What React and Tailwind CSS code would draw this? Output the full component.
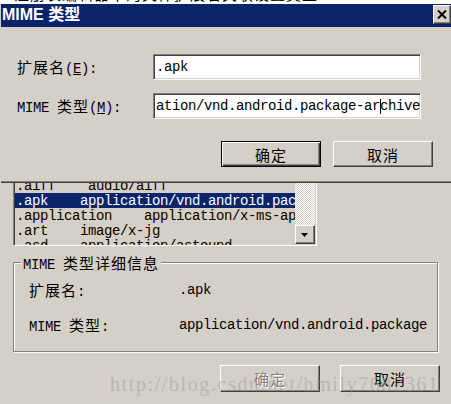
import React from 'react';

const raised =
  'border border-t-white border-l-white border-b-[#404040] border-r-[#404040] shadow-[inset_-1px_-1px_#808080]';
const sunken =
  'border border-t-[#808080] border-l-[#808080] border-b-white border-r-white shadow-[inset_1px_1px_#404040,inset_-1px_-1px_#d4d0c8]';

const Zh = ({ children, className = '' }) => (
  <span className={'text-[15px] tracking-[1px] font-["Noto_Sans_CJK_SC",sans-serif] ' + className}>{children}</span>
);

const rows = [
  '.aiff    audio/aiff',
  '.apk    application/vnd.android.package-archive',
  '.application    application/x-ms-application',
  '.art    image/x-jg',
  '.asd    application/astound',
];

const App = () => {
  return (
    <div className="relative w-[451px] h-[404px] overflow-hidden bg-[#d4d0c8] text-black text-[14px] tracking-[-0.4px] leading-none font-['Liberation_Mono','Noto_Sans_CJK_SC',monospace]">
      {/* parent window, clipped text at the very top */}
      <div className="h-[4px] overflow-hidden bg-white">
        <div className="h-[20px] -mt-[19px] pl-[14px] whitespace-pre flex items-end">
          <Zh>注册表编辑器中的文件扩展名关联设置</Zh>   <Zh>类型</Zh>
        </div>
      </div>

      {/* MIME dialog */}
      <div className="flex flex-col pl-px">
        <div className="h-[23px] bg-[#0a246a] flex items-start justify-between">
          <span className="pl-[1px] pt-[3px] text-white text-[16px] font-bold tracking-normal font-['Liberation_Sans','Noto_Sans_CJK_SC',sans-serif]">
            MIME 类型
          </span>
          <button className={'mt-px w-[18px] h-[19px] bg-[#d4d0c8] flex items-center justify-center ' + raised}>
            <svg width="10" height="9" viewBox="0 0 10 9">
              <path d="M1 0.5 L9 8.5 M9 0.5 L1 8.5" stroke="#000" strokeWidth="2" />
            </svg>
          </button>
        </div>

        <div className="h-[154px] flex flex-col pt-[27px]">
          <div className="flex items-center h-[26px]">
            <span className="w-[152px] pl-[16px] whitespace-pre">
              <Zh>扩展名</Zh>(<span className="underline">E</span>):
            </span>
            <div className={'w-[268px] h-[26px] bg-white flex items-center pl-[2px] ' + sunken}>.apk</div>
          </div>
          <div className="flex items-center h-[26px] mt-[13px]">
            <span className="w-[152px] pl-[16px] whitespace-pre">
              MIME <Zh>类型</Zh>(<span className="underline">M</span>):
            </span>
            <div className={'w-[268px] h-[26px] bg-white flex items-center pl-[2px] whitespace-pre overflow-hidden ' + sunken}>
              ation/vnd.android.package-ar
              <span className="inline-block w-px h-[15px] bg-black -mr-px" />
              chive
            </div>
          </div>
          <div className="flex mt-[22px] pl-[220px] gap-[12px]">
            <button className="w-[100px] h-[26px] border border-black shadow-[inset_1px_1px_#fff,inset_-1px_-1px_#404040,inset_-2px_-2px_#808080] flex items-center justify-center">
              <Zh>确定</Zh>
            </button>
            <button className={'w-[100px] h-[26px] flex items-center justify-center ' + raised}>
              <Zh>取消</Zh>
            </button>
          </div>
        </div>
        <div className="h-px bg-[#808080]" />
        <div className="h-px bg-[#404040]" />
      </div>

      {/* parent dialog content */}
      <div className="flex flex-col">
        <div className="ml-[13px] w-[304px] h-[63px] flex border-l border-l-[#808080] border-r border-r-white border-b border-b-white shadow-[inset_1px_0_#404040,inset_-1px_-1px_#d4d0c8]">
          <div className="flex-1 overflow-hidden pl-px">
            <div className="-mt-[5px] whitespace-pre">
              {rows.map((r, i) => (
                <div
                  key={r}
                  className={'h-[15px] flex items-center pl-[1px] ' + (i === 1 ? 'bg-[#0a246a] text-white' : '')}
                >
                  {r}
                </div>
              ))}
            </div>
          </div>
          <div className="w-[20px] mr-px mb-px flex flex-col">
            <div className="flex-1 bg-[repeating-conic-gradient(#ffffff_0_25%,#d4d0c8_0_50%)] bg-[length:2px_2px]" />
            <div className={'h-[19px] bg-[#d4d0c8] flex items-center justify-center ' + raised}>
              <svg width="8" height="4" viewBox="0 0 8 4">
                <path d="M0 0 H7 L3.5 4 Z" fill="#000" />
              </svg>
            </div>
          </div>
        </div>

        <div className="relative ml-[13px] mt-[16px] w-[425px] h-[90px] border border-[#808080] shadow-[1px_1px_#fff,inset_1px_1px_#fff] flex flex-col pt-[19px] pl-[15px]">
          <span className="absolute -top-[8px] left-[7px] bg-[#d4d0c8] px-[2px] whitespace-pre">
            MIME <Zh>类型详细信息</Zh>
          </span>
          <div className="flex items-center h-[16px]">
            <span className="w-[150px]"><Zh>扩展名</Zh>:</span>
            <span>.apk</span>
          </div>
          <div className="flex items-center h-[16px] mt-[19px]">
            <span className="w-[150px] whitespace-pre">MIME <Zh>类型</Zh>:</span>
            <span>application/vnd.android.package</span>
          </div>
        </div>

        <div className="flex mt-[13px] pl-[220px] gap-[20px]">
          <button className={'w-[100px] h-[27px] flex items-center justify-center text-[#808080] [text-shadow:1px_1px_#fff] ' + raised}>
            <Zh>确定</Zh>
          </button>
          <button className={'w-[100px] h-[27px] flex items-center justify-center ' + raised}>
            <Zh>取消</Zh>
          </button>
        </div>
      </div>

      {/* watermark */}
      <div className="absolute left-[110px] top-[374px] text-[20px] tracking-[1.6px] text-[#a8a59f]/60 font-['Liberation_Serif',serif] whitespace-pre pointer-events-none">
        http://blog.csdn.net/hmily7682361
      </div>
    </div>
  );
};

export default App;
